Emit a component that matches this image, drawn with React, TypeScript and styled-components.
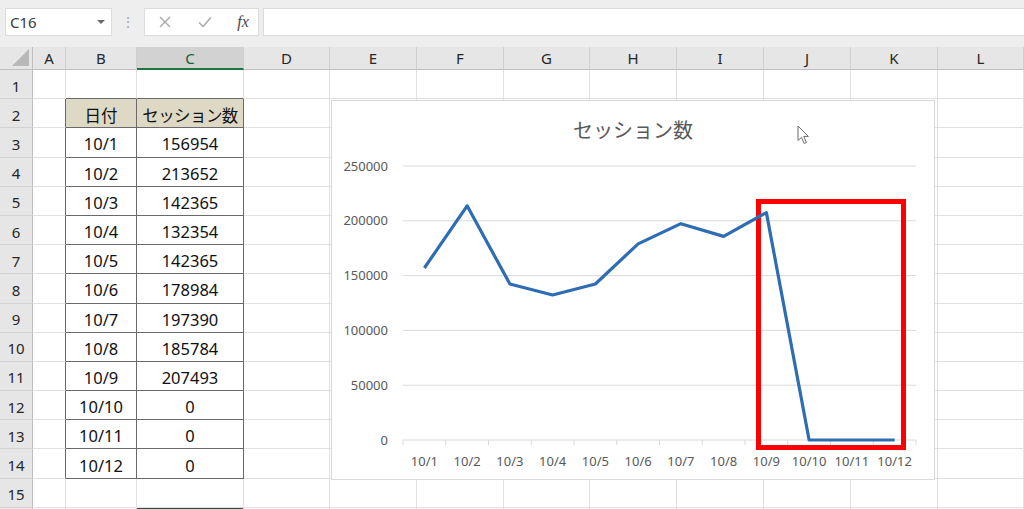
import React from 'react';
import styled, { createGlobalStyle } from 'styled-components';

const GlobalStyle = createGlobalStyle`
  html, body {
    margin: 0;
    padding: 0;
    background: #ffffff;
    overflow: hidden;
  }
  body {
    width: 1024px;
    height: 509px;
    font-family: "Noto Sans", "Noto Sans CJK JP", sans-serif;
  }
  * { box-sizing: border-box; }
`;

const COLUMNS = ['A', 'B', 'C', 'D', 'E', 'F', 'G', 'H', 'I', 'J', 'K', 'L'];
const COL_WIDTHS = [33, 71, 107, 86, 87, 87, 86, 87, 87, 87, 87, 86];
const ROW_COUNT = 15;
const SELECTED_COL = 'C';

const DATA: { date: string; value: number }[] = [
  { date: '10/1', value: 156954 },
  { date: '10/2', value: 213652 },
  { date: '10/3', value: 142365 },
  { date: '10/4', value: 132354 },
  { date: '10/5', value: 142365 },
  { date: '10/6', value: 178984 },
  { date: '10/7', value: 197390 },
  { date: '10/8', value: 185784 },
  { date: '10/9', value: 207493 },
  { date: '10/10', value: 0 },
  { date: '10/11', value: 0 },
  { date: '10/12', value: 0 },
];

// table occupies B2:C14
function cellText(row: number, col: string) {
  if (row === 2 && col === 'B') return '日付';
  if (row === 2 && col === 'C') return 'セッション数';
  const item = DATA[row - 3];
  if (!item) return '';
  if (col === 'B') return item.date;
  if (col === 'C') return String(item.value);
  return '';
}

const inTable = (row: number, col: string) => row >= 2 && row <= 14 && (col === 'B' || col === 'C');

export default function App() {
  return (
    <>
      <GlobalStyle />
      <FormulaBar>
        <NameBox>
          <span>C16</span>
          <Caret />
        </NameBox>
        <Grip>⋮</Grip>
        <FxBox>
          <svg width="12" height="12" viewBox="0 0 12 12">
            <path d="M1 1 L11 11 M11 1 L1 11" stroke="#a6a6a6" strokeWidth="1.3" fill="none" />
          </svg>
          <svg width="14" height="12" viewBox="0 0 14 12">
            <path d="M1 6.5 L5 10.5 L13 1.5" stroke="#a6a6a6" strokeWidth="1.4" fill="none" />
          </svg>
          <FxLabel>fx</FxLabel>
        </FxBox>
        <FormulaInput />
      </FormulaBar>
      <Sheet>
        <Corner />
        {COLUMNS.map((c) => (
          <ColumnHeader key={c} $selected={c === SELECTED_COL}>
            {c}
          </ColumnHeader>
        ))}
        {Array.from({ length: ROW_COUNT }, (_, i) => i + 1).map((row) => (
          <React.Fragment key={row}>
            <RowHeader>{row}</RowHeader>
            {COLUMNS.map((col) => (
              <Cell
                key={col}
                $header={row === 2 && inTable(row, col)}
                $edgeRight={inTable(row, col) || (col === 'A' && row >= 2 && row <= 14)}
                $edgeBottom={inTable(row, col) || (row === 1 && (col === 'B' || col === 'C'))}
                $tight={row === 2 && col === 'C'}
              >
                {cellText(row, col)}
              </Cell>
            ))}
          </React.Fragment>
        ))}
        {/* first pixel of row 16, where the C16 selection starts */}
        <NextRowStrip />
        {COLUMNS.map((col) => (
          <NextRowCell key={col} $active={col === SELECTED_COL} />
        ))}
        <SessionChart />
      </Sheet>
    </>
  );
}

function SessionChart() {
  const left = 71;
  const right = 584;
  const zeroY = 289;
  const topY = 15;
  const max = 250000;
  const step = (right - left) / DATA.length;
  const toY = (v: number) => zeroY - (v / max) * (zeroY - topY);
  const ticks = [250000, 200000, 150000, 100000, 50000, 0];
  const points = DATA.map((d, i) => `${left + step * (i + 0.5)},${toY(d.value)}`).join(' ');

  return (
    <ChartFrame>
      <ChartTitle>セッション数</ChartTitle>
      <svg width="602" height="328" viewBox="0 0 602 328">
        {ticks.map((t) => (
          <g key={t}>
            <line x1={left} x2={right} y1={toY(t)} y2={toY(t)} stroke="#d9d9d9" strokeWidth="1" />
            <AxisText x={56} y={toY(t) + 4.5} textAnchor="end">
              {t}
            </AxisText>
          </g>
        ))}
        {Array.from({ length: DATA.length + 1 }, (_, i) => (
          <line
            key={i}
            x1={left + step * i}
            x2={left + step * i}
            y1={zeroY}
            y2={zeroY + 5}
            stroke="#d9d9d9"
            strokeWidth="1"
          />
        ))}
        {DATA.map((d, i) => (
          <AxisText key={d.date} x={left + step * (i + 0.5)} y={zeroY + 25.5} textAnchor="middle">
            {d.date}
          </AxisText>
        ))}
        <rect x="426.5" y="50.5" width="145" height="246" fill="none" stroke="#ff0000" strokeWidth="5" />
        <polyline points={points} fill="none" stroke="#2e6db4" strokeWidth="3.2" strokeLinejoin="round" />
      </svg>
      <Pointer>
        <svg width="14" height="20" viewBox="0 0 14 20">
          <path
            d="M1 1 L1 15.5 L4.5 12.3 L7.2 18.5 L9.4 17.5 L6.8 11.4 L11.4 11.4 Z"
            fill="#ffffff"
            stroke="#6b6b6b"
            strokeWidth="1"
            strokeLinejoin="round"
          />
        </svg>
      </Pointer>
    </ChartFrame>
  );
}

const FormulaBar = styled.div`
  display: flex;
  align-items: flex-start;
  height: 47px;
  padding: 8px 0 0 5px;
  background: #eeeeee;
`;

const NameBox = styled.div`
  display: flex;
  align-items: center;
  justify-content: space-between;
  width: 107px;
  height: 28px;
  padding: 0 6px 0 4px;
  background: #ffffff;
  border: 1px solid #dcdcdc;
  font-size: 15px;
  color: #3a3a3a;
`;

const Caret = styled.span`
  width: 0;
  height: 0;
  border-left: 4px solid transparent;
  border-right: 4px solid transparent;
  border-top: 4px solid #6a6a6a;
`;

const Grip = styled.div`
  width: 32px;
  height: 28px;
  line-height: 28px;
  text-align: center;
  font-size: 14px;
  color: #a8a8a8;
`;

const FxBox = styled.div`
  display: grid;
  grid-template-columns: 40px 40px 36px;
  justify-items: center;
  align-items: center;
  width: 115px;
  height: 28px;
  background: #ffffff;
  border: 1px solid #dcdcdc;
`;

const FxLabel = styled.span`
  font-family: "Liberation Serif", "DejaVu Serif", serif;
  font-style: italic;
  font-size: 16px;
  color: #454545;
`;

const FormulaInput = styled.div`
  flex: 1;
  height: 28px;
  margin-left: 4px;
  background: #ffffff;
  border: 1px solid #dcdcdc;
  border-right: none;
`;

const Sheet = styled.div`
  position: relative;
  display: grid;
  grid-template-columns: 33px ${COL_WIDTHS.map((w) => `${w}px`).join(' ')};
  grid-template-rows: 23px repeat(${ROW_COUNT}, 29.2px) 4px;
`;

const Corner = styled.div`
  position: relative;
  background: #e6e6e6;
  border-right: 1px solid #bfbfbf;
  border-bottom: 1px solid #bfbfbf;

  &::after {
    content: '';
    position: absolute;
    right: 3px;
    bottom: 3px;
    border-left: 17px solid transparent;
    border-bottom: 17px solid #b8b8b8;
  }
`;

const ColumnHeader = styled.div<{ $selected?: boolean }>`
  display: flex;
  align-items: center;
  justify-content: center;
  background: ${(p) => (p.$selected ? '#d2d2d2' : '#e6e6e6')};
  color: ${(p) => (p.$selected ? '#1d5b38' : '#262626')};
  border-right: 1px solid #cfcfcf;
  border-bottom: ${(p) => (p.$selected ? '2px solid #217346' : '1px solid #bfbfbf')};
  font-size: 15px;
`;

const RowHeader = styled.div`
  display: flex;
  align-items: center;
  justify-content: center;
  padding-top: 3px;
  background: #e6e6e6;
  color: #262626;
  border-right: 1px solid #bfbfbf;
  border-bottom: 1px solid #d2d2d2;
  font-size: 15px;
`;

const Cell = styled.div<{ $header?: boolean; $edgeRight?: boolean; $edgeBottom?: boolean; $tight?: boolean }>`
  display: flex;
  align-items: center;
  justify-content: center;
  padding-top: 3px;
  background: ${(p) => (p.$header ? '#ddd9c4' : '#ffffff')};
  border-right: 1px solid ${(p) => (p.$edgeRight ? '#6a6a6a' : '#e1e1e1')};
  border-bottom: 1px solid ${(p) => (p.$edgeBottom ? '#6a6a6a' : '#e1e1e1')};
  font-size: 16.5px;
  letter-spacing: ${(p) => (p.$tight ? '-0.6px' : 'normal')};
  color: #111111;
  white-space: nowrap;
`;

const NextRowStrip = styled.div`
  background: #e6e6e6;
  border-right: 1px solid #bfbfbf;
`;

const NextRowCell = styled.div<{ $active?: boolean }>`
  background: #ffffff;
  border-right: 1px solid #e1e1e1;
  box-shadow: ${(p) => (p.$active ? 'inset 0 2px 0 #1f5a45' : 'none')};
`;

const ChartFrame = styled.div`
  position: absolute;
  left: 331px;
  top: 53px;
  width: 604px;
  height: 380px;
  background: #ffffff;
  border: 1px solid #d9d9d9;
  display: flex;
  flex-direction: column;
`;

const ChartTitle = styled.div`
  height: 50px;
  padding-top: 14px;
  line-height: 30px;
  text-align: center;
  font-family: "Noto Sans CJK JP", sans-serif;
  font-size: 20px;
  color: #595959;
`;

const AxisText = styled.text`
  font-family: "Noto Sans", "Noto Sans CJK JP", sans-serif;
  font-size: 13px;
  fill: #595959;
`;

const Pointer = styled.div`
  position: absolute;
  left: 465px;
  top: 24px;
  line-height: 0;
`;
